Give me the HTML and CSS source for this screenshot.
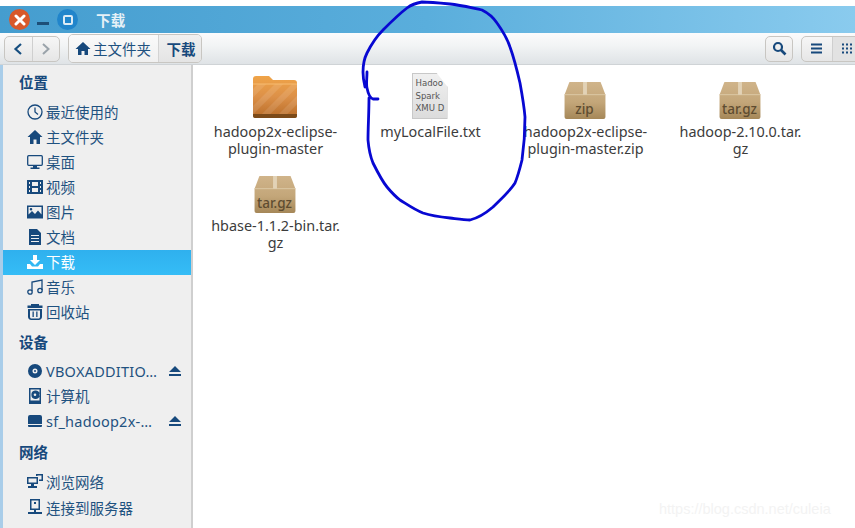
FILE: index.html
```html
<!DOCTYPE html>
<html lang="zh">
<head>
<meta charset="utf-8">
<title>下载</title>
<link rel="stylesheet" href="styles.css">
</head>
<body>
<svg class="defs" width="0" height="0">
  <defs>
    <linearGradient id="boxg" x1="0" y1="0" x2="0" y2="1"><stop offset="0" stop-color="#d0b48a"/><stop offset=".55" stop-color="#c3a679"/><stop offset="1" stop-color="#a58758"/></linearGradient>
    <linearGradient id="folderg" x1="0" y1="0" x2="0" y2="1"><stop offset="0" stop-color="#f0a448"/><stop offset=".5" stop-color="#dc9048"/><stop offset="1" stop-color="#b86c28"/></linearGradient>
    <pattern id="stripes" width="12" height="12" patternUnits="userSpaceOnUse" patternTransform="rotate(45)"><rect width="6" height="12" fill="#fff" opacity=".1"/></pattern>
    <symbol id="box" viewBox="0 0 44 38">
      <path d="M6 0H38L43 13V36a2 2 0 0 1-2 2H3a2 2 0 0 1-2-2V13Z" fill="url(#boxg)"/>
      <path d="M1 13H43" stroke="#dcc8a6" stroke-width="1"/>
      <rect x="20" y="0" width="4" height="13" fill="#e2d2b6"/>
    </symbol>
    <symbol id="ic-eject" viewBox="0 0 14 12"><path d="M7 1 13 7H1ZM1 9H13V11H1Z" fill="#17497c"/></symbol>
  </defs>
</svg>
<div class="gap"></div>
<header class="titlebar">
  <span class="wbtn close"><svg width="12" height="12" viewBox="0 0 12 12"><path d="M2 2 10 10M10 2 2 10" stroke="#fff" stroke-width="3" stroke-linecap="round"/></svg></span>
  <span class="minimize"></span>
  <span class="wbtn maximize"><span class="maxbox"></span></span>
  <span class="wtitle">下载</span>
</header>
<div class="toolbar">
  <div class="group navgroup">
    <span class="tbtn nav"><svg width="10" height="14" viewBox="0 0 10 14"><path d="M8 2 2.500 7 8 12" fill="none" stroke="#174f80" stroke-width="2.200"/></svg></span>
    <span class="tbtn nav"><svg width="10" height="14" viewBox="0 0 10 14"><path d="M2 2 7.500 7 2 12" fill="none" stroke="#9aa3aa" stroke-width="2"/></svg></span>
  </div>
  <div class="group crumbs">
    <span class="crumb"><svg width="16" height="15" viewBox="0 0 16 15"><path d="M8 1 0.500 8H3V14H6.500V10H9.500V14H13V8H15.500Z" fill="#17497c"/></svg>主文件夹</span>
    <span class="crumb current">下载</span>
  </div>
  <div class="spacer"></div>
  <div class="group single">
    <span class="tbtn icon"><svg width="15" height="15" viewBox="0 0 15 15"><circle cx="6" cy="6" r="4" fill="none" stroke="#17497c" stroke-width="2.200"/><path d="M9 9 13.500 13.500" stroke="#17497c" stroke-width="2.600"/></svg></span>
  </div>
  <div class="group views">
    <span class="tbtn icon"><svg width="13" height="11" viewBox="0 0 13 11"><path d="M1 1.500H12M1 5.500H12M1 9.500H12" stroke="#17497c" stroke-width="2"/></svg></span>
    <span class="tbtn icon active"><svg width="13" height="11" viewBox="0 0 13 11"><path d="M1 1.500H12M1 5.500H12M1 9.500H12" stroke="#17497c" stroke-width="2" stroke-dasharray="2 2"/></svg></span>
  </div>
</div>
<div class="main">
  <div class="strip"></div>
  <nav class="sidebar">
    <h2 class="sec first">位置</h2>
    <a class="row"><svg viewBox="0 0 16 16"><circle cx="8" cy="8" r="7" fill="none" stroke="#17497c" stroke-width="1.300"/><path d="M8 3.500V8L11 10.500" fill="none" stroke="#17497c" stroke-width="1.300"/></svg><span class="lbl">最近使用的</span></a>
    <a class="row"><svg viewBox="0 0 16 16"><path d="M8 1 0.500 8H3V15H6.500V10.500H9.500V15H13V8H15.500Z" fill="#17497c"/></svg><span class="lbl">主文件夹</span></a>
    <a class="row"><svg viewBox="0 0 16 16"><rect x="0.700" y="1.700" width="14.600" height="9.600" rx="1" fill="none" stroke="#17497c" stroke-width="1.300"/><path d="M6 12H10V13.500H12.500V15H3.500V13.500H6Z" fill="#17497c"/></svg><span class="lbl">桌面</span></a>
    <a class="row"><svg viewBox="0 0 16 16"><path fill-rule="evenodd" d="M0 1H16V15H0ZM2 3V5H3V3ZM2 7V9H3V7ZM2 11V13H3V11ZM13 3V5H14V3ZM13 7V9H14V7ZM13 11V13H14V11ZM5 3V7H11V3ZM5 9V13H11V9Z" fill="#17497c"/></svg><span class="lbl">视频</span></a>
    <a class="row"><svg viewBox="0 0 16 16"><path fill-rule="evenodd" d="M0 1.500H16V14.500H0ZM1.500 3V10.500L5 7 8 10 11 6.500 14.500 10.500V3ZM4 4A1.300 1.300 0 1 0 4 6.600 1.300 1.300 0 0 0 4 4Z" fill="#17497c"/></svg><span class="lbl">图片</span></a>
    <a class="row"><svg viewBox="0 0 16 16"><path fill-rule="evenodd" d="M2 0H10L14 4V16H2ZM4 6V7H12V6ZM4 9V10H12V9ZM4 12V13H12V12Z" fill="#17497c"/></svg><span class="lbl">文档</span></a>
    <a class="row selected"><svg viewBox="0 0 16 16"><path d="M6 1H10V6H13L8 11 3 6H6ZM0 10H3L5 12.500H11L13 10H16V15H0Z" fill="#fff"/></svg><span class="lbl">下载</span></a>
    <a class="row"><svg viewBox="0 0 16 16"><path d="M5 12V3L15 1V11" fill="none" stroke="#17497c" stroke-width="1.300"/><circle cx="3" cy="13" r="2.200" fill="none" stroke="#17497c" stroke-width="1.300"/><circle cx="13" cy="11.500" r="2.200" fill="none" stroke="#17497c" stroke-width="1.300"/></svg><span class="lbl">音乐</span></a>
    <a class="row"><svg viewBox="0 0 16 16"><path fill-rule="evenodd" d="M4 0H12V1.500H15.500V4H0.500V1.500H4ZM1 5H15V13C15 15 13 16 12 16H4C3 16 1 15 1 13ZM3 6.500V13C3 13.800 3.700 14.500 4.500 14.500H11.500C12.300 14.500 13 13.800 13 13V6.500ZM5.500 7.500H6.800V13H5.500ZM9.200 7.500H10.500V13H9.200Z" fill="#17497c"/></svg><span class="lbl">回收站</span></a>
    <h2 class="sec">设备</h2>
    <a class="row"><svg viewBox="0 0 16 16"><path fill-rule="evenodd" d="M8 1A7 7 0 1 0 8 15 7 7 0 0 0 8 1ZM8 5.500A2.500 2.500 0 1 1 8 10.500 2.500 2.500 0 0 1 8 5.500Z" fill="#17497c"/><circle cx="8" cy="8" r="1" fill="#17497c"/></svg><span class="lbl latin">VBOXADDITIO…</span><svg class="eject"><use href="#ic-eject"/></svg></a>
    <a class="row"><svg viewBox="0 0 16 16"><path fill-rule="evenodd" d="M2 0H14V16H2ZM3.500 1.500V12.500H12.500V1.500ZM8 2.500A4.300 4.300 0 1 1 8 11 4.300 4.300 0 0 1 8 2.500ZM8 5.500A1.300 1.300 0 1 0 8 8.100 1.300 1.300 0 0 0 8 5.500Z" fill="#17497c"/></svg><span class="lbl">计算机</span></a>
    <a class="row"><svg viewBox="0 0 16 16"><path d="M3 2H13A2 2 0 0 1 15 4V11H1V4A2 2 0 0 1 3 2ZM1 12H15V13A1 1 0 0 1 14 14H2A1 1 0 0 1 1 13Z" fill="#17497c"/></svg><span class="lbl latin">sf_hadoop2x-…</span><svg class="eject"><use href="#ic-eject"/></svg></a>
    <h2 class="sec last">网络</h2>
    <a class="row tall"><svg viewBox="0 0 16 16"><path fill-rule="evenodd" d="M0 4H11V11H7V13H10V15H1V13H4V11H0ZM1.500 5.500V9.500H9.500V5.500ZM9 1H16V8H12V6.500H14.500V2.500H10.500V3H9Z" fill="#17497c"/></svg><span class="lbl">浏览网络</span></a>
    <a class="row tall"><svg viewBox="0 0 16 16"><path fill-rule="evenodd" d="M3 0H13V11H9V13H15V15H1V13H7V11H3ZM4.500 1.500V9.500H11.500V1.500ZM7 3H9V5H7Z" fill="#17497c"/></svg><span class="lbl">连接到服务器</span></a>
  </nav>
  <section class="files">
    <div class="file">
      <svg class="ficon" width="46" height="46" viewBox="0 0 46 46"><path d="M1 6a3 3 0 0 1 3-3H17L21 7H42a3 3 0 0 1 3 3V42a3 3 0 0 1-3 3H4a3 3 0 0 1-3-3Z" fill="url(#folderg)"/><rect x="1" y="11" width="44" height="30" fill="url(#stripes)"/><path d="M1 11H45" stroke="#f7bb70"/><path d="M1 41H45V43a2 2 0 0 1-2 2H3a2 2 0 0 1-2-2Z" fill="#7c4a18"/></svg>
      <span class="fname">hadoop2x-eclipse-<br>plugin-master</span>
    </div>
    <div class="file">
      <div class="doc"><span>Hadoo</span><span>Spark</span><span>XMU D</span></div>
      <span class="fname">myLocalFile.txt</span>
    </div>
    <div class="file">
      <div class="boxi"><svg width="44" height="37"><use href="#box"/></svg><span class="ext">zip</span></div>
      <span class="fname">hadoop2x-eclipse-<br>plugin-master.zip</span>
    </div>
    <div class="file">
      <div class="boxi"><svg width="44" height="37"><use href="#box"/></svg><span class="ext">tar.gz</span></div>
      <span class="fname">hadoop-2.10.0.tar.<br>gz</span>
    </div>
    <div class="file">
      <div class="boxi"><svg width="44" height="37"><use href="#box"/></svg><span class="ext">tar.gz</span></div>
      <span class="fname">hbase-1.1.2-bin.tar.<br>gz</span>
    </div>
  </section>
</div>
<svg class="ink" width="855" height="528" viewBox="0 0 855 528"><path d="M367 72C367 78 366 84 367 88C368 93 370 98 373 99L378 99M369 98C369 112 368 128 368 140C369 152 371 158 373 163C378 173 382 181 387 187C392 193 396 197 400 200C408 205 415 210 423 213C432 216 440 217 450 218C458 219 464 220 470 220C478 218 486 213 493 207C501 199 510 191 515 183C518 176 520 168 522 160C524 146 525 130 525 117C524 105 522 94 520 83C517 70 514 58 510 47C507 38 502 30 497 23C493 17 488 13 482 10C472 8 461 5 450 4C440 3 430 2 422 2C416 3 411 5 407 8C399 14 391 22 383 30C377 36 371 45 367 53C364 59 363 65 363 72C363 78 364 83 365 87" fill="none" stroke="#0808d2" stroke-width="2.800" stroke-linecap="round" stroke-linejoin="round"/></svg>
<div class="mark">https://blog.csdn.net/culeia</div>
</body>
</html>
```
FILE: styles.css
```css
* { box-sizing: border-box; }
html, body { margin: 0; padding: 0; }
body {
  width: 855px; height: 528px; overflow: hidden; position: relative;
  background: #fff;
  font-family: "Noto Sans", "Noto Sans CJK SC", sans-serif;
}
.defs { position: absolute; }
.gap { height: 6px; background: #fff; }
.titlebar {
  height: 27px; display: flex; align-items: center; padding-left: 9px;
  background: linear-gradient(90deg, #459dcf 0%, #5aaedc 50%, #8acbee 100%);
}
.wbtn { width: 21px; height: 21px; border-radius: 50%; display: flex; align-items: center; justify-content: center; }
.close { background: #d8582a; }
.minimize { width: 12px; height: 3px; background: #1d4f78; margin: 7px 8px 0 7px; }
.maximize { background: #2185cb; }
.maxbox { width: 10px; height: 10px; border: 2px solid #dcebf5; border-radius: 2px; }
.wtitle { margin-left: 18px; font-size: 14.5px; font-weight: 700; color: #e6f1f7; line-height: 20px; letter-spacing: .3px; }
.toolbar {
  height: 32px; display: flex; align-items: center; padding-left: 4px;
  background: linear-gradient(180deg, #fbfbfc 0%, #f2f4f5 40%, #dfe3e6 100%);
  border-bottom: 1px solid #cfd3d6;
}
.group {
  display: flex; height: 26px; border: 1px solid #c8c6c2; border-radius: 5px;
  background: linear-gradient(180deg, #f6f6f6, #e6e6e6);
  overflow: hidden;
}
.navgroup { width: 56px; }
.tbtn { display: flex; align-items: center; justify-content: center; flex: 1; }
.nav + .nav { border-left: 1px solid #cfcfcf; }
.crumbs { margin-left: 8px; height: 29px; width: 134px; }
.crumb { display: flex; align-items: center; gap: 2px; font-size: 14.5px; color: #1f5280; padding-left: 6px; width: 90px; white-space: nowrap; background: linear-gradient(180deg, #fafafa, #f0f0f0); }
.crumb.current { width: 44px; padding-left: 8px; font-weight: 700; color: #17497c; border-left: 1px solid #d3d3d3; background: linear-gradient(180deg, #f0f0f0, #e4e4e4); }
.spacer { flex: 1; }
.single { width: 28px; }
.views { width: 62px; margin-left: 8px; margin-right: -8px; }
.views .active { border-left: 1px solid #cfcfcf; background: #e2e2e2; }
.main { display: flex; height: 463px; }
.strip { width: 3px; background: #a9cde9; }
.sidebar { width: 190px; background: #efefef; border-right: 2px solid #cfcfcf; }
.sec { margin: 4px 0 0; padding-left: 16px; height: 30px; line-height: 29px; font-size: 14.5px; font-weight: 700; color: #17497c; }
.sec.first { margin-top: 3px; height: 31px; }
.sec.last { margin-top: 5px; }
.row { display: flex; align-items: center; height: 25px; padding-left: 24px; color: #1f5280; font-size: 14.5px; white-space: nowrap; }
.row.tall { height: 26px; }
.row > svg:first-child { width: 16px; height: 16px; margin-right: 3px; flex: none; }
.lbl { flex: 1; }
.latin { letter-spacing: .25px; }
.eject { width: 14px; height: 12px; margin-right: 9px; flex: none; }
.selected { margin: 1px 0 -1px; padding-bottom: 2px; background: linear-gradient(180deg, #2fb0ee, #35bdf6); color: #fff; }
.files {
  flex: 1; display: grid; grid-template-columns: repeat(4, 155px); grid-auto-rows: 94px;
  align-content: start; padding: 8px 0 0 5px;
  background: #fff; overflow: hidden;
}
.file { display: flex; flex-direction: column; align-items: center; text-align: center; }
.ficon { height: 46px; flex: none; margin-left: -2px; }
.fname { display: block; margin-top: 4px; font-size: 14.4px; line-height: 17px; color: #3c3c3c; white-space: nowrap; font-family: "Noto Sans", sans-serif; }
.doc {
  position: relative; width: 36px; height: 46px; padding: 3px 0 0 3px; display: flex; flex-direction: column; flex: none; margin-left: -2px;
  background: linear-gradient(180deg, #f0f0f0, #dcdcdc); border: 1px solid #c8c8c8;
  clip-path: polygon(0 0, 70% 0, 100% 30%, 100% 100%, 0 100%);
  font-size: 9.5px; line-height: 12.5px; color: #555; text-align: left; font-family: "DejaVu Sans Condensed", "Liberation Sans", sans-serif;
}
.boxi { position: relative; width: 44px; height: 46px; padding-top: 9px; flex: none; margin-left: -2px; }
.boxi svg { display: block; }
.ext { position: absolute; left: 0; right: 0; bottom: 0; text-align: center; font-size: 13.5px; font-weight: 500; line-height: 20px; color: #5e4c30; }
.ink { position: absolute; left: 0; top: 0; pointer-events: none; }
.mark { position: absolute; left: 659px; top: 501px; font: 14.5px "Liberation Sans", sans-serif; color: #f3f3f3; white-space: nowrap; }
```
